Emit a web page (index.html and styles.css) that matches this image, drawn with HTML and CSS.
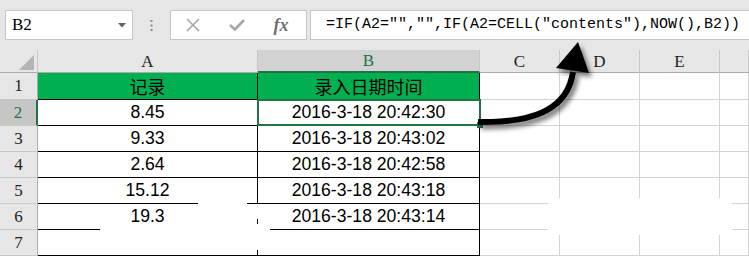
FILE: index.html
```html
<!DOCTYPE html>
<html lang="zh-CN">
<head>
<meta charset="utf-8">
<title>Excel</title>
<link rel="stylesheet" href="styles.css">
</head>
<body>
<div class="toolbar">
  <div class="namebox">
    <span class="name">B2</span>
    <svg class="caret" width="8" height="5" viewBox="0 0 8 5"><polygon points="0,0 8,0 4,4.5" fill="#5f5f5f"/></svg>
  </div>
  <div class="grip">
    <svg width="3" height="11" viewBox="0 0 3 11"><rect x="0.5" y="0" width="2" height="2" fill="#8a8a8a"/><rect x="0.5" y="4.5" width="2" height="2" fill="#8a8a8a"/><rect x="0.5" y="9" width="2" height="2" fill="#8a8a8a"/></svg>
  </div>
  <div class="fnbox">
    <span class="fn-slot"><svg width="14" height="14" viewBox="0 0 14 14"><path d="M1 1 L13 13 M13 1 L1 13" stroke="#a6a6a6" stroke-width="1.6" fill="none"/></svg></span>
    <span class="fn-slot"><svg width="16" height="12" viewBox="0 0 16 12"><path d="M1 6 L6 10.5 L15 1" stroke="#a6a6a6" stroke-width="2.6" fill="none"/></svg></span>
    <span class="fn-slot fx">fx</span>
  </div>
  <div class="formula">=IF(A2="","",IF(A2=CELL("contents"),NOW(),B2))</div>
</div>

<div class="sheet">
  <div class="c h corner"><svg width="38" height="23" viewBox="0 0 38 23"><polygon points="34,5 34,20 19,20" fill="#b4b4b4"/></svg></div>
  <div class="c h">A</div>
  <div class="c h selcol">B</div>
  <div class="c h">C</div>
  <div class="c h">D</div>
  <div class="c h">E</div>
  <div class="c h"></div>

  <div class="c rh">1</div>
  <div class="c t g cjk">记录</div>
  <div class="c t g cjk">录入日期时间</div>
  <div class="c"></div><div class="c"></div><div class="c"></div><div class="c"></div>

  <div class="c rh selrow">2</div>
  <div class="c t">8.45</div>
  <div class="c t">2016-3-18 20:42:30</div>
  <div class="c"></div><div class="c"></div><div class="c"></div><div class="c"></div>

  <div class="c rh">3</div>
  <div class="c t">9.33</div>
  <div class="c t">2016-3-18 20:43:02</div>
  <div class="c"></div><div class="c"></div><div class="c"></div><div class="c"></div>

  <div class="c rh">4</div>
  <div class="c t">2.64</div>
  <div class="c t">2016-3-18 20:42:58</div>
  <div class="c"></div><div class="c"></div><div class="c"></div><div class="c"></div>

  <div class="c rh">5</div>
  <div class="c t">15.12</div>
  <div class="c t">2016-3-18 20:43:18</div>
  <div class="c"></div><div class="c"></div><div class="c"></div><div class="c"></div>

  <div class="c rh">6</div>
  <div class="c t">19.3</div>
  <div class="c t">2016-3-18 20:43:14</div>
  <div class="c"></div><div class="c"></div><div class="c"></div><div class="c"></div>

  <div class="c rh">7</div>
  <div class="c t"></div>
  <div class="c t"></div>
  <div class="c"></div><div class="c"></div><div class="c"></div><div class="c"></div>
</div>

<div class="selection"><span class="handle"></span></div>

<div class="patch p1"></div>
<div class="patch p2"></div>
<div class="patch p3"></div>
<div class="patch p4"></div>

<svg class="arrow" width="749" height="256" viewBox="0 0 749 256">
  <g class="arrow-shape">
    <path d="M478 122 C 540 123, 568 106, 573 72" stroke="#000" stroke-width="6" fill="none"/>
    <polygon points="578,42 556,68 589,73" fill="#000"/>
  </g>
</svg>
</body>
</html>
```

FILE: styles.css
```css
* {
  box-sizing: border-box;
}

body {
  margin: 0;
  width: 749px;
  height: 256px;
  overflow: hidden;
  position: relative;
  background: #e6e6e6;
  font-family: "Liberation Sans", "Noto Sans CJK SC", sans-serif;
}

/* ---------- formula bar ---------- */
.toolbar {
  height: 50px;
  display: flex;
  align-items: flex-start;
  padding: 10px 0 0 5px;
}

.namebox {
  width: 128px;
  height: 30px;
  background: #fff;
  border: 1px solid #c6c6c6;
  display: flex;
  align-items: center;
  padding-left: 6px;
  font-family: "Liberation Serif", serif;
  font-size: 17px;
  color: #000;
}

.namebox .name {
  flex: 1;
}

.caret {
  margin-right: 6px;
}

.grip {
  width: 37px;
  height: 30px;
  display: flex;
  align-items: center;
  justify-content: center;
}

.fnbox {
  width: 137px;
  height: 30px;
  background: #fff;
  border: 1px solid #c6c6c6;
  display: grid;
  grid-template-columns: repeat(3, 44px);
  align-items: center;
}

.fn-slot {
  display: flex;
  justify-content: center;
  align-items: center;
}

.fx {
  font-family: "Liberation Serif", serif;
  font-style: italic;
  font-weight: bold;
  font-size: 18px;
  color: #707070;
  line-height: 1;
}

.formula {
  flex: 1;
  margin-left: 3px;
  height: 30px;
  background: #fff;
  border: 1px solid #c6c6c6;
  border-right: none;
  padding-left: 15px;
  font-family: "Liberation Mono", monospace;
  font-size: 15px;
  line-height: 28px;
  white-space: nowrap;
  color: #000;
}

/* ---------- sheet grid ---------- */
.sheet {
  display: grid;
  grid-template-columns: 38px 220px 222px 80px 80px 80px 1fr;
  grid-template-rows: 23px 27px repeat(6, 26px);
}

.c {
  background: #fff;
  border-right: 1px solid #d4d4d4;
  border-bottom: 1px solid #d4d4d4;
  display: flex;
  align-items: center;
  justify-content: center;
  font-size: 17.6px;
  color: #000;
  white-space: nowrap;
  overflow: hidden;
}

.h {
  background: #e6e6e6;
  border-right-color: #c8c8c8;
  border-bottom-color: #ababab;
  font-family: "Liberation Serif", serif;
  font-size: 17px;
  color: #222;
  padding-top: 1px;
}

.corner {
  padding: 0;
  display: block;
}

.corner svg {
  display: block;
}

.selcol {
  background: #d2d2d2;
  border-bottom: 2px solid #217346;
  color: #217346;
}

.rh {
  background: #e6e6e6;
  border-right-color: #ababab;
  border-bottom-color: #c8c8c8;
  font-family: "Liberation Serif", serif;
  font-size: 17px;
  color: #222;
}

.selrow {
  background: #c6c6c6;
  border-right: 2px solid #217346;
  color: #217346;
}

.t {
  border-right-color: #000;
  border-bottom-color: #000;
}

.g {
  background: #00b050;
}

.cjk {
  font-family: "Noto Sans CJK SC", sans-serif;
  font-size: 18px;
}

/* ---------- overlays ---------- */
.selection {
  position: absolute;
  left: 257px;
  top: 99px;
  width: 224px;
  height: 27px;
  border: 2px solid #217346;
}

.handle {
  position: absolute;
  right: -4px;
  bottom: -4px;
  width: 6px;
  height: 6px;
  background: #217346;
}

.patch {
  position: absolute;
  background: #fff;
}

.p1 { left: 198px; top: 196px; width: 49px; height: 26px; }
.p2 { left: 255px; top: 204px; width: 7px; height: 15px; }
.p3 { left: 100px; top: 224px; width: 170px; height: 26px; }
.p4 { left: 548px; top: 198px; width: 184px; height: 37px; }

.arrow {
  position: absolute;
  left: 0;
  top: 0;
  pointer-events: none;
}

.arrow-shape {
  filter: drop-shadow(3px 4px 2.5px rgba(0, 0, 0, 0.55));
}
```
